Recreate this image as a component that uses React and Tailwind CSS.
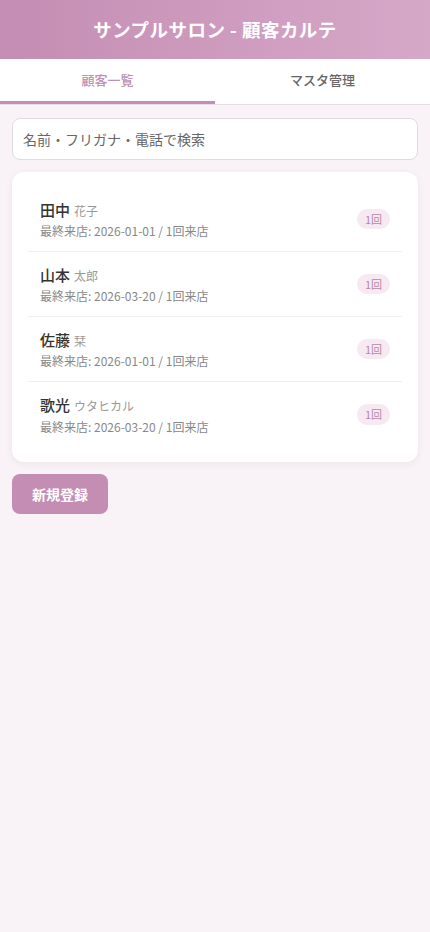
const customers = [
  { name: '田中', kana: '花子', last: '2026-01-01', visits: 1 },
  { name: '山本', kana: '太郎', last: '2026-03-20', visits: 1 },
  { name: '佐藤', kana: '栞', last: '2026-01-01', visits: 1 },
  { name: '歌光', kana: 'ウタヒカル', last: '2026-03-20', visits: 1 },
]

export default function App() {
  return (
    <div
      className="min-h-[932px] bg-[#f9f3f7] text-[#333]"
      style={{ fontFamily: '"Noto Sans CJK JP", "Noto Sans", sans-serif' }}
    >
      <header className="h-[59px] flex items-center justify-center bg-gradient-to-r from-[#c48db3] to-[#d6a8c8]">
        <h1 className="text-white text-[18.5px] font-bold tracking-wide">サンプルサロン - 顧客カルテ</h1>
      </header>

      <nav className="flex bg-white border-b border-[#e8dde4]">
        <button className="flex-1 h-[45px] text-[13px] font-medium text-[#c092b2] border-b-[3px] border-[#c48db3]">
          顧客一覧
        </button>
        <button className="flex-1 h-[45px] text-[13px] font-medium text-[#666] border-b-[3px] border-transparent">
          マスタ管理
        </button>
      </nav>

      <main className="px-3 pt-[13px]">
        <input
          type="text"
          placeholder="名前・フリガナ・電話で検索"
          className="w-full h-[42px] px-[10px] rounded-lg border border-[#ddd] bg-white text-[14px] placeholder:text-[#666] outline-none"
        />

        <div className="mt-[12px] bg-white rounded-xl shadow-[0_2px_8px_rgba(0,0,0,0.06)] px-4 py-[15px]">
          {customers.map((c, i) => (
            <div
              key={i}
              className={`flex items-center justify-between px-3 h-[65px] ${
                i < customers.length - 1 ? 'border-b border-[#eee]' : ''
              }`}
            >
              <div className="pt-[3px]">
                <div className="flex items-baseline gap-1 leading-tight">
                  <span className="text-[15px] font-medium text-[#333]">{c.name}</span>
                  <span className="text-[12px] text-[#999]">{c.kana}</span>
                </div>
                <div className="text-[12px] text-[#888] mt-[3px]">
                  最終来店: {c.last} / {c.visits}回来店
                </div>
              </div>
              <span className="px-2 py-[2px] rounded-full bg-[#f7e9f2] text-[11px] text-[#b48aa6]">
                {c.visits}回
              </span>
            </div>
          ))}
        </div>

        <button className="mt-[12px] px-5 h-[40px] rounded-lg bg-[#c48db3] text-white text-[14px] font-bold">
          新規登録
        </button>
      </main>
    </div>
  )
}
